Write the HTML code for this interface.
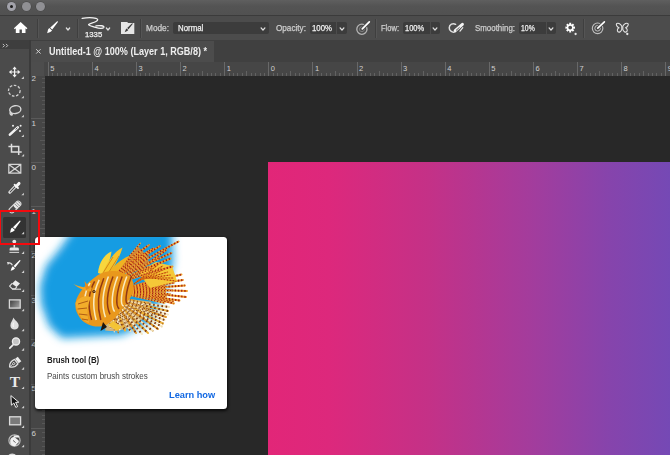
<!DOCTYPE html>
<html>
<head>
<meta charset="utf-8">
<title>Photoshop Brush Tool</title>
<style>
html,body{margin:0;padding:0;}
body{width:670px;height:455px;overflow:hidden;position:relative;background:#282828;font-family:"Liberation Sans",sans-serif;color:#dcdcdc;}
.abs{position:absolute;}
#titlebar{left:0;top:0;width:670px;height:15px;background:linear-gradient(#5f5f5f,#545454 40%,#515151);}
#titleline{left:0;top:15px;width:670px;height:1px;background:#3b3b3b;}
.dot{position:absolute;top:1.8px;width:9.4px;height:9.4px;border-radius:50%;background:#909094;box-shadow:0 0 0 0.5px #474747;}
.dot i{position:absolute;left:3px;top:3px;width:3.4px;height:3.4px;border-radius:50%;background:#1a1a1a;}
#optbar{left:0;top:16px;width:670px;height:24px;background:#4c4c4c;}
#tabbar{left:0;top:40px;width:670px;height:22px;background:#404040;}
#tab{left:31px;top:41px;width:183px;height:21px;background:#4c4c4c;}
#tabtxt{left:48.5px;top:46px;font-size:9.6px;font-weight:bold;color:#e8e8e8;white-space:nowrap;line-height:12px;letter-spacing:0px;}
#tabx{left:35.5px;top:45px;font-size:10px;color:#cfcfcf;line-height:12px;}
#toolhead{left:0;top:40px;width:30px;height:9px;background:#3e3e3e;}
#toolbar{left:0;top:49px;width:30px;height:406px;background:#4b4b4b;}
#tooledge{left:29px;top:40px;width:2px;height:415px;background:#3b3b3b;}
#hruler{left:31px;top:62px;width:639px;height:14px;background:#464646;}
#vruler{left:31px;top:76px;width:13.5px;height:379px;background:#464646;}
#rcorner{left:31px;top:62px;width:13px;height:14px;background:#4d4d4d;}
.tk{position:absolute;width:1px;background:#686868;}
.tk.h{height:1px;}
.tk.m{background:#626262;}
.rn{position:absolute;font-size:7.5px;line-height:8px;color:#d0d0d0;}
.opt{position:absolute;font-size:9px;line-height:12px;top:22px;color:#dddddd;white-space:nowrap;}
.box{position:absolute;top:22px;height:12px;background:#3c3c3c;border-radius:2px;}
.box b{position:absolute;top:0;width:1px;height:12px;background:#4c4c4c;}
.vsep{position:absolute;top:19px;width:1px;height:19px;background:#3f3f3f;border-right:1px solid #555;}
#canvas{left:268px;top:162px;width:402px;height:293px;background:linear-gradient(90deg,#e22678 0%,#dd287c 15%,#c43187 40%,#a43c9c 65%,#8644ac 85%,#7549b5 100%);}
#tip{left:34.8px;top:237.2px;width:192px;height:172.3px;background:#ffffff;border-radius:3.5px;overflow:hidden;box-shadow:0.5px 1.5px 3px 0.5px rgba(0,0,0,0.75);}
#redbox{left:-1px;top:209.5px;width:37px;height:31px;border:2px solid #f40a0e;}
#sel{left:3px;top:217px;width:22.5px;height:20.5px;background:#333333;border-radius:1.5px;}
.tt{position:absolute;white-space:nowrap;}
svg{position:absolute;overflow:visible;}
.tx{position:absolute;white-space:nowrap;line-height:12px;transform-origin:0 50%;}
.rn.v{font-size:8px;}
.tk.h.M{background:#5a5a5a;}
.tk.h.m{background:#585858;}

</style>
</head>
<body>
<div id="titlebar" class="abs">
  <div class="dot" style="left:6.6px;background:#a2a2aa;"><i></i></div>
  <div class="dot" style="left:21.5px;"></div>
  <div class="dot" style="left:36px;"></div>
</div>
<div id="titleline" class="abs"></div>
<div id="optbar" class="abs"></div>
<div id="opts">
  <div class="vsep" style="left:37px;"></div>
  <div class="vsep" style="left:77px;"></div>
  <div class="vsep" style="left:140px;"></div>
  <div class="vsep" style="left:375px;"></div>
  <div class="vsep" style="left:583px;"></div>
  <div class="box" style="left:173px;width:96px;"></div>
  <div class="box" style="left:309.5px;width:37px;"><b style="left:26.5px"></b></div>
  <div class="box" style="left:403px;width:37px;"><b style="left:27px"></b></div>
  <div class="box" style="left:519px;width:37px;"><b style="left:26.5px"></b></div>
</div>
<div id="tabbar" class="abs"></div>
<div id="tab" class="abs"></div>
<div id="toolhead" class="abs"></div>
<div id="toolbar" class="abs"></div>
<div id="tooledge" class="abs"></div>
<div id="hruler" class="abs"></div>
<div id="vruler" class="abs"></div>
<div id="rcorner" class="abs"></div>
<div class="tk" style="left:47.8px;top:62px;height:14px;"></div>
<div class="tk m" style="left:52.2px;top:73px;height:3px;"></div>
<div class="tk m" style="left:56.6px;top:73px;height:3px;"></div>
<div class="tk m" style="left:61.0px;top:73px;height:3px;"></div>
<div class="tk m" style="left:65.4px;top:73px;height:3px;"></div>
<div class="tk m" style="left:69.9px;top:71px;height:5px;"></div>
<div class="tk m" style="left:74.3px;top:73px;height:3px;"></div>
<div class="tk m" style="left:78.7px;top:73px;height:3px;"></div>
<div class="tk m" style="left:83.1px;top:73px;height:3px;"></div>
<div class="tk m" style="left:87.5px;top:73px;height:3px;"></div>
<div class="tk" style="left:91.9px;top:62px;height:14px;"></div>
<div class="tk m" style="left:96.3px;top:73px;height:3px;"></div>
<div class="tk m" style="left:100.7px;top:73px;height:3px;"></div>
<div class="tk m" style="left:105.1px;top:73px;height:3px;"></div>
<div class="tk m" style="left:109.5px;top:73px;height:3px;"></div>
<div class="tk m" style="left:114.0px;top:71px;height:5px;"></div>
<div class="tk m" style="left:118.4px;top:73px;height:3px;"></div>
<div class="tk m" style="left:122.8px;top:73px;height:3px;"></div>
<div class="tk m" style="left:127.2px;top:73px;height:3px;"></div>
<div class="tk m" style="left:131.6px;top:73px;height:3px;"></div>
<div class="tk" style="left:136.0px;top:62px;height:14px;"></div>
<div class="tk m" style="left:140.4px;top:73px;height:3px;"></div>
<div class="tk m" style="left:144.8px;top:73px;height:3px;"></div>
<div class="tk m" style="left:149.2px;top:73px;height:3px;"></div>
<div class="tk m" style="left:153.6px;top:73px;height:3px;"></div>
<div class="tk m" style="left:158.1px;top:71px;height:5px;"></div>
<div class="tk m" style="left:162.5px;top:73px;height:3px;"></div>
<div class="tk m" style="left:166.9px;top:73px;height:3px;"></div>
<div class="tk m" style="left:171.3px;top:73px;height:3px;"></div>
<div class="tk m" style="left:175.7px;top:73px;height:3px;"></div>
<div class="tk" style="left:180.1px;top:62px;height:14px;"></div>
<div class="tk m" style="left:184.5px;top:73px;height:3px;"></div>
<div class="tk m" style="left:188.9px;top:73px;height:3px;"></div>
<div class="tk m" style="left:193.3px;top:73px;height:3px;"></div>
<div class="tk m" style="left:197.7px;top:73px;height:3px;"></div>
<div class="tk m" style="left:202.2px;top:71px;height:5px;"></div>
<div class="tk m" style="left:206.6px;top:73px;height:3px;"></div>
<div class="tk m" style="left:211.0px;top:73px;height:3px;"></div>
<div class="tk m" style="left:215.4px;top:73px;height:3px;"></div>
<div class="tk m" style="left:219.8px;top:73px;height:3px;"></div>
<div class="tk" style="left:224.2px;top:62px;height:14px;"></div>
<div class="tk m" style="left:228.6px;top:73px;height:3px;"></div>
<div class="tk m" style="left:233.0px;top:73px;height:3px;"></div>
<div class="tk m" style="left:237.4px;top:73px;height:3px;"></div>
<div class="tk m" style="left:241.8px;top:73px;height:3px;"></div>
<div class="tk m" style="left:246.2px;top:71px;height:5px;"></div>
<div class="tk m" style="left:250.7px;top:73px;height:3px;"></div>
<div class="tk m" style="left:255.1px;top:73px;height:3px;"></div>
<div class="tk m" style="left:259.5px;top:73px;height:3px;"></div>
<div class="tk m" style="left:263.9px;top:73px;height:3px;"></div>
<div class="tk" style="left:268.3px;top:62px;height:14px;"></div>
<div class="tk m" style="left:272.7px;top:73px;height:3px;"></div>
<div class="tk m" style="left:277.1px;top:73px;height:3px;"></div>
<div class="tk m" style="left:281.5px;top:73px;height:3px;"></div>
<div class="tk m" style="left:285.9px;top:73px;height:3px;"></div>
<div class="tk m" style="left:290.4px;top:71px;height:5px;"></div>
<div class="tk m" style="left:294.8px;top:73px;height:3px;"></div>
<div class="tk m" style="left:299.2px;top:73px;height:3px;"></div>
<div class="tk m" style="left:303.6px;top:73px;height:3px;"></div>
<div class="tk m" style="left:308.0px;top:73px;height:3px;"></div>
<div class="tk" style="left:312.4px;top:62px;height:14px;"></div>
<div class="tk m" style="left:316.8px;top:73px;height:3px;"></div>
<div class="tk m" style="left:321.2px;top:73px;height:3px;"></div>
<div class="tk m" style="left:325.6px;top:73px;height:3px;"></div>
<div class="tk m" style="left:330.0px;top:73px;height:3px;"></div>
<div class="tk m" style="left:334.5px;top:71px;height:5px;"></div>
<div class="tk m" style="left:338.9px;top:73px;height:3px;"></div>
<div class="tk m" style="left:343.3px;top:73px;height:3px;"></div>
<div class="tk m" style="left:347.7px;top:73px;height:3px;"></div>
<div class="tk m" style="left:352.1px;top:73px;height:3px;"></div>
<div class="tk" style="left:356.5px;top:62px;height:14px;"></div>
<div class="tk m" style="left:360.9px;top:73px;height:3px;"></div>
<div class="tk m" style="left:365.3px;top:73px;height:3px;"></div>
<div class="tk m" style="left:369.7px;top:73px;height:3px;"></div>
<div class="tk m" style="left:374.1px;top:73px;height:3px;"></div>
<div class="tk m" style="left:378.6px;top:71px;height:5px;"></div>
<div class="tk m" style="left:383.0px;top:73px;height:3px;"></div>
<div class="tk m" style="left:387.4px;top:73px;height:3px;"></div>
<div class="tk m" style="left:391.8px;top:73px;height:3px;"></div>
<div class="tk m" style="left:396.2px;top:73px;height:3px;"></div>
<div class="tk" style="left:400.6px;top:62px;height:14px;"></div>
<div class="tk m" style="left:405.0px;top:73px;height:3px;"></div>
<div class="tk m" style="left:409.4px;top:73px;height:3px;"></div>
<div class="tk m" style="left:413.8px;top:73px;height:3px;"></div>
<div class="tk m" style="left:418.2px;top:73px;height:3px;"></div>
<div class="tk m" style="left:422.6px;top:71px;height:5px;"></div>
<div class="tk m" style="left:427.1px;top:73px;height:3px;"></div>
<div class="tk m" style="left:431.5px;top:73px;height:3px;"></div>
<div class="tk m" style="left:435.9px;top:73px;height:3px;"></div>
<div class="tk m" style="left:440.3px;top:73px;height:3px;"></div>
<div class="tk" style="left:444.7px;top:62px;height:14px;"></div>
<div class="tk m" style="left:449.1px;top:73px;height:3px;"></div>
<div class="tk m" style="left:453.5px;top:73px;height:3px;"></div>
<div class="tk m" style="left:457.9px;top:73px;height:3px;"></div>
<div class="tk m" style="left:462.3px;top:73px;height:3px;"></div>
<div class="tk m" style="left:466.8px;top:71px;height:5px;"></div>
<div class="tk m" style="left:471.2px;top:73px;height:3px;"></div>
<div class="tk m" style="left:475.6px;top:73px;height:3px;"></div>
<div class="tk m" style="left:480.0px;top:73px;height:3px;"></div>
<div class="tk m" style="left:484.4px;top:73px;height:3px;"></div>
<div class="tk" style="left:488.8px;top:62px;height:14px;"></div>
<div class="tk m" style="left:493.2px;top:73px;height:3px;"></div>
<div class="tk m" style="left:497.6px;top:73px;height:3px;"></div>
<div class="tk m" style="left:502.0px;top:73px;height:3px;"></div>
<div class="tk m" style="left:506.4px;top:73px;height:3px;"></div>
<div class="tk m" style="left:510.9px;top:71px;height:5px;"></div>
<div class="tk m" style="left:515.3px;top:73px;height:3px;"></div>
<div class="tk m" style="left:519.7px;top:73px;height:3px;"></div>
<div class="tk m" style="left:524.1px;top:73px;height:3px;"></div>
<div class="tk m" style="left:528.5px;top:73px;height:3px;"></div>
<div class="tk" style="left:532.9px;top:62px;height:14px;"></div>
<div class="tk m" style="left:537.3px;top:73px;height:3px;"></div>
<div class="tk m" style="left:541.7px;top:73px;height:3px;"></div>
<div class="tk m" style="left:546.1px;top:73px;height:3px;"></div>
<div class="tk m" style="left:550.5px;top:73px;height:3px;"></div>
<div class="tk m" style="left:555.0px;top:71px;height:5px;"></div>
<div class="tk m" style="left:559.4px;top:73px;height:3px;"></div>
<div class="tk m" style="left:563.8px;top:73px;height:3px;"></div>
<div class="tk m" style="left:568.2px;top:73px;height:3px;"></div>
<div class="tk m" style="left:572.6px;top:73px;height:3px;"></div>
<div class="tk" style="left:577.0px;top:62px;height:14px;"></div>
<div class="tk m" style="left:581.4px;top:73px;height:3px;"></div>
<div class="tk m" style="left:585.8px;top:73px;height:3px;"></div>
<div class="tk m" style="left:590.2px;top:73px;height:3px;"></div>
<div class="tk m" style="left:594.6px;top:73px;height:3px;"></div>
<div class="tk m" style="left:599.0px;top:71px;height:5px;"></div>
<div class="tk m" style="left:603.5px;top:73px;height:3px;"></div>
<div class="tk m" style="left:607.9px;top:73px;height:3px;"></div>
<div class="tk m" style="left:612.3px;top:73px;height:3px;"></div>
<div class="tk m" style="left:616.7px;top:73px;height:3px;"></div>
<div class="tk" style="left:621.1px;top:62px;height:14px;"></div>
<div class="tk m" style="left:625.5px;top:73px;height:3px;"></div>
<div class="tk m" style="left:629.9px;top:73px;height:3px;"></div>
<div class="tk m" style="left:634.3px;top:73px;height:3px;"></div>
<div class="tk m" style="left:638.7px;top:73px;height:3px;"></div>
<div class="tk m" style="left:643.2px;top:71px;height:5px;"></div>
<div class="tk m" style="left:647.6px;top:73px;height:3px;"></div>
<div class="tk m" style="left:652.0px;top:73px;height:3px;"></div>
<div class="tk m" style="left:656.4px;top:73px;height:3px;"></div>
<div class="tk m" style="left:660.8px;top:73px;height:3px;"></div>
<div class="tk" style="left:665.2px;top:62px;height:14px;"></div>
<div class="tk m" style="left:669.6px;top:73px;height:3px;"></div>
<div class="rn" style="left:50.3px;top:65px;">5</div>
<div class="rn" style="left:94.4px;top:65px;">4</div>
<div class="rn" style="left:138.5px;top:65px;">3</div>
<div class="rn" style="left:182.6px;top:65px;">2</div>
<div class="rn" style="left:226.7px;top:65px;">1</div>
<div class="rn" style="left:270.8px;top:65px;">0</div>
<div class="rn" style="left:314.9px;top:65px;">1</div>
<div class="rn" style="left:359.0px;top:65px;">2</div>
<div class="rn" style="left:403.1px;top:65px;">3</div>
<div class="rn" style="left:447.2px;top:65px;">4</div>
<div class="rn" style="left:491.3px;top:65px;">5</div>
<div class="rn" style="left:535.4px;top:65px;">6</div>
<div class="rn" style="left:579.5px;top:65px;">7</div>
<div class="rn" style="left:623.6px;top:65px;">8</div>
<div class="rn" style="left:667.7px;top:65px;">9</div>
<div class="tk h m" style="top:77.8px;left:41.5px;width:3px;"></div>
<div class="tk h m" style="top:82.3px;left:41.5px;width:3px;"></div>
<div class="tk h m" style="top:86.7px;left:41.5px;width:3px;"></div>
<div class="tk h m" style="top:91.1px;left:41.5px;width:3px;"></div>
<div class="tk h m" style="top:95.5px;left:39.5px;width:5px;"></div>
<div class="tk h m" style="top:100.0px;left:41.5px;width:3px;"></div>
<div class="tk h m" style="top:104.4px;left:41.5px;width:3px;"></div>
<div class="tk h m" style="top:108.8px;left:41.5px;width:3px;"></div>
<div class="tk h m" style="top:113.3px;left:41.5px;width:3px;"></div>
<div class="tk h M" style="top:117.7px;left:31px;width:13.5px;"></div>
<div class="tk h m" style="top:122.1px;left:41.5px;width:3px;"></div>
<div class="tk h m" style="top:126.6px;left:41.5px;width:3px;"></div>
<div class="tk h m" style="top:131.0px;left:41.5px;width:3px;"></div>
<div class="tk h m" style="top:135.4px;left:41.5px;width:3px;"></div>
<div class="tk h m" style="top:139.8px;left:39.5px;width:5px;"></div>
<div class="tk h m" style="top:144.3px;left:41.5px;width:3px;"></div>
<div class="tk h m" style="top:148.7px;left:41.5px;width:3px;"></div>
<div class="tk h m" style="top:153.1px;left:41.5px;width:3px;"></div>
<div class="tk h m" style="top:157.6px;left:41.5px;width:3px;"></div>
<div class="tk h M" style="top:162.0px;left:31px;width:13.5px;"></div>
<div class="tk h m" style="top:166.4px;left:41.5px;width:3px;"></div>
<div class="tk h m" style="top:170.9px;left:41.5px;width:3px;"></div>
<div class="tk h m" style="top:175.3px;left:41.5px;width:3px;"></div>
<div class="tk h m" style="top:179.7px;left:41.5px;width:3px;"></div>
<div class="tk h m" style="top:184.2px;left:39.5px;width:5px;"></div>
<div class="tk h m" style="top:188.6px;left:41.5px;width:3px;"></div>
<div class="tk h m" style="top:193.0px;left:41.5px;width:3px;"></div>
<div class="tk h m" style="top:197.4px;left:41.5px;width:3px;"></div>
<div class="tk h m" style="top:201.9px;left:41.5px;width:3px;"></div>
<div class="tk h M" style="top:206.3px;left:31px;width:13.5px;"></div>
<div class="tk h m" style="top:210.7px;left:41.5px;width:3px;"></div>
<div class="tk h m" style="top:215.2px;left:41.5px;width:3px;"></div>
<div class="tk h m" style="top:219.6px;left:41.5px;width:3px;"></div>
<div class="tk h m" style="top:224.0px;left:41.5px;width:3px;"></div>
<div class="tk h m" style="top:228.4px;left:39.5px;width:5px;"></div>
<div class="tk h m" style="top:232.9px;left:41.5px;width:3px;"></div>
<div class="tk h m" style="top:237.3px;left:41.5px;width:3px;"></div>
<div class="tk h m" style="top:241.7px;left:41.5px;width:3px;"></div>
<div class="tk h m" style="top:246.2px;left:41.5px;width:3px;"></div>
<div class="tk h M" style="top:250.6px;left:31px;width:13.5px;"></div>
<div class="tk h m" style="top:255.0px;left:41.5px;width:3px;"></div>
<div class="tk h m" style="top:259.5px;left:41.5px;width:3px;"></div>
<div class="tk h m" style="top:263.9px;left:41.5px;width:3px;"></div>
<div class="tk h m" style="top:268.3px;left:41.5px;width:3px;"></div>
<div class="tk h m" style="top:272.8px;left:39.5px;width:5px;"></div>
<div class="tk h m" style="top:277.2px;left:41.5px;width:3px;"></div>
<div class="tk h m" style="top:281.6px;left:41.5px;width:3px;"></div>
<div class="tk h m" style="top:286.0px;left:41.5px;width:3px;"></div>
<div class="tk h m" style="top:290.5px;left:41.5px;width:3px;"></div>
<div class="tk h M" style="top:294.9px;left:31px;width:13.5px;"></div>
<div class="tk h m" style="top:299.3px;left:41.5px;width:3px;"></div>
<div class="tk h m" style="top:303.8px;left:41.5px;width:3px;"></div>
<div class="tk h m" style="top:308.2px;left:41.5px;width:3px;"></div>
<div class="tk h m" style="top:312.6px;left:41.5px;width:3px;"></div>
<div class="tk h m" style="top:317.1px;left:39.5px;width:5px;"></div>
<div class="tk h m" style="top:321.5px;left:41.5px;width:3px;"></div>
<div class="tk h m" style="top:325.9px;left:41.5px;width:3px;"></div>
<div class="tk h m" style="top:330.3px;left:41.5px;width:3px;"></div>
<div class="tk h m" style="top:334.8px;left:41.5px;width:3px;"></div>
<div class="tk h M" style="top:339.2px;left:31px;width:13.5px;"></div>
<div class="tk h m" style="top:343.6px;left:41.5px;width:3px;"></div>
<div class="tk h m" style="top:348.1px;left:41.5px;width:3px;"></div>
<div class="tk h m" style="top:352.5px;left:41.5px;width:3px;"></div>
<div class="tk h m" style="top:356.9px;left:41.5px;width:3px;"></div>
<div class="tk h m" style="top:361.3px;left:39.5px;width:5px;"></div>
<div class="tk h m" style="top:365.8px;left:41.5px;width:3px;"></div>
<div class="tk h m" style="top:370.2px;left:41.5px;width:3px;"></div>
<div class="tk h m" style="top:374.6px;left:41.5px;width:3px;"></div>
<div class="tk h m" style="top:379.1px;left:41.5px;width:3px;"></div>
<div class="tk h M" style="top:383.5px;left:31px;width:13.5px;"></div>
<div class="tk h m" style="top:387.9px;left:41.5px;width:3px;"></div>
<div class="tk h m" style="top:392.4px;left:41.5px;width:3px;"></div>
<div class="tk h m" style="top:396.8px;left:41.5px;width:3px;"></div>
<div class="tk h m" style="top:401.2px;left:41.5px;width:3px;"></div>
<div class="tk h m" style="top:405.6px;left:39.5px;width:5px;"></div>
<div class="tk h m" style="top:410.1px;left:41.5px;width:3px;"></div>
<div class="tk h m" style="top:414.5px;left:41.5px;width:3px;"></div>
<div class="tk h m" style="top:418.9px;left:41.5px;width:3px;"></div>
<div class="tk h m" style="top:423.4px;left:41.5px;width:3px;"></div>
<div class="tk h M" style="top:427.8px;left:31px;width:13.5px;"></div>
<div class="tk h m" style="top:432.2px;left:41.5px;width:3px;"></div>
<div class="tk h m" style="top:436.7px;left:41.5px;width:3px;"></div>
<div class="tk h m" style="top:441.1px;left:41.5px;width:3px;"></div>
<div class="tk h m" style="top:445.5px;left:41.5px;width:3px;"></div>
<div class="tk h m" style="top:449.9px;left:39.5px;width:5px;"></div>
<div class="tk h m" style="top:454.4px;left:41.5px;width:3px;"></div>
<div class="rn v" style="left:31.6px;top:75.2px;">2</div>
<div class="rn v" style="left:31.6px;top:119.5px;">1</div>
<div class="rn v" style="left:31.6px;top:163.8px;">0</div>
<div class="rn v" style="left:31.6px;top:208.1px;">1</div>
<div class="rn v" style="left:31.6px;top:252.4px;">2</div>
<div class="rn v" style="left:31.6px;top:296.7px;">3</div>
<div class="rn v" style="left:31.6px;top:341.0px;">4</div>
<div class="rn v" style="left:31.6px;top:385.3px;">5</div>
<div class="rn v" style="left:31.6px;top:429.6px;">6</div>
<div id="canvas" class="abs"></div>
<div id="sel" class="abs"></div>
<svg style="left:62.8px;top:23.6px" width="10" height="10" viewBox="-5 -5 10 10"><path d="M-1.65 -1.0 L0 1.0 L1.65 -1.0" fill="none" stroke="#e0e0e0" stroke-width="1.25" stroke-linecap="round" stroke-linejoin="round"/></svg><svg style="left:103.3px;top:23.5px" width="10" height="10" viewBox="-5 -5 10 10"><path d="M-1.65 -1.0 L0 1.0 L1.65 -1.0" fill="none" stroke="#e0e0e0" stroke-width="1.25" stroke-linecap="round" stroke-linejoin="round"/></svg><svg style="left:258.2px;top:23.6px" width="10" height="10" viewBox="-5 -5 10 10"><path d="M-1.9 -1.1 L0 1.1 L1.9 -1.1" fill="none" stroke="#e0e0e0" stroke-width="1.3" stroke-linecap="round" stroke-linejoin="round"/></svg><svg style="left:336.6px;top:23.6px" width="10" height="10" viewBox="-5 -5 10 10"><path d="M-1.9 -1.1 L0 1.1 L1.9 -1.1" fill="none" stroke="#e0e0e0" stroke-width="1.3" stroke-linecap="round" stroke-linejoin="round"/></svg><svg style="left:430.3px;top:23.6px" width="10" height="10" viewBox="-5 -5 10 10"><path d="M-1.9 -1.1 L0 1.1 L1.9 -1.1" fill="none" stroke="#e0e0e0" stroke-width="1.3" stroke-linecap="round" stroke-linejoin="round"/></svg><svg style="left:546px;top:23.6px" width="10" height="10" viewBox="-5 -5 10 10"><path d="M-1.9 -1.1 L0 1.1 L1.9 -1.1" fill="none" stroke="#e0e0e0" stroke-width="1.3" stroke-linecap="round" stroke-linejoin="round"/></svg>
<svg id="ico" style="left:0;top:0" width="670" height="455" viewBox="0 0 670 455">
<path d="M20.65 21.9 L27.4 28.3 L26.5 29.2 L25.5 28.3 L25.5 33.1 L21.9 33.1 L21.9 29.4 L19.5 29.4 L19.5 33.1 L15.8 33.1 L15.8 28.3 L14.8 29.2 L13.9 28.3Z" fill="#fff"/>
<g transform="translate(47,33.3) rotate(-48.2)" fill="#fff"><path d="M0 0 C1.63 -0.3 3.05 -2.20 5.48 -1.90 L5.48 1.90 C3.45 2.20 1.63 0.7 0 0Z"/><path d="M6.30 -1.45 L15.44 -0.6 A0.6 0.6 0 0 1 15.44 0.6 L6.30 1.45Z"/></g>
<path d="M82.2 18.3 C87 17.5 93 17.6 96 18.3 C98.5 19 98 20.5 96 21.5 C93 23 89 23.5 88.6 24.5 C88.3 25.4 92 26.2 95.6 27.4 C99 28.6 103.2 28.8 103.9 27.2 C104.4 25.8 100 25.2 96 25.8" fill="none" stroke="#f4f4f4" stroke-width="1.35" stroke-linecap="round"/>
<path d="M121 22 L127.3 22 L128 22.9 L134.3 22.9 L134.3 33.9 L121 33.9Z" fill="#e6e6e6"/>
<g transform="translate(124.6,32.3) rotate(-48)" fill="#3a3a3a"><path d="M0 0 C1.5 -0.3 2.5 -1.4 4.2 -1.2 L4.2 1.2 C2.8 1.4 1.4 0.6 0 0Z"/><path d="M4.9 -0.9 L11.8 -0.5 L11.8 0.5 L4.9 0.9Z"/></g>
<circle cx="361.9" cy="29.2" r="5.1" fill="none" stroke="#b4b4b4" stroke-width="1.3"/>
<circle cx="361.9" cy="29.2" r="2.4" fill="none" stroke="#888" stroke-width="0.9"/>
<path d="M361.9 29.2 L369.3 21.9" stroke="#4c4c4c" stroke-width="3.6" stroke-linecap="round"/>
<path d="M362.3 28.9 L369.3 21.9" stroke="#fff" stroke-width="1.7" stroke-linecap="round"/>
<path d="M455.6 24.3 A4.2 4.2 0 1 0 455.4 31.6" fill="none" stroke="#e0e0e0" stroke-width="1.5" stroke-linecap="round"/>
<path d="M455.2 30.6 L462.4 24.3" stroke="#f4f4f4" stroke-width="3" stroke-linecap="round"/>
<path d="M456.3 30.2 L459.3 27.5" stroke="#444" stroke-width="0.9" stroke-linecap="round"/>
<path d="M460 31.2 L462.8 27.6" stroke="#e8e8e8" stroke-width="1.2" stroke-linecap="round"/>
<path d="M574.99 26.57 L574.99 28.63 L573.58 28.50 L573.23 29.36 L574.32 30.26 L572.86 31.72 L571.96 30.63 L571.10 30.98 L571.23 32.39 L569.17 32.39 L569.30 30.98 L568.44 30.63 L567.54 31.72 L566.08 30.26 L567.17 29.36 L566.82 28.50 L565.41 28.63 L565.41 26.57 L566.82 26.70 L567.17 25.84 L566.08 24.94 L567.54 23.48 L568.44 24.57 L569.30 24.22 L569.17 22.81 L571.23 22.81 L571.10 24.22 L571.96 24.57 L572.86 23.48 L574.32 24.94 L573.23 25.84 L573.58 26.70Z M572.1 27.6 A1.9 1.9 0 1 0 568.3000000000001 27.6 A1.9 1.9 0 1 0 572.1 27.6Z" fill="#fff" fill-rule="evenodd"/>
<circle cx="575.6" cy="34" r="1.15" fill="#e8e8e8"/>
<circle cx="597.6" cy="28.3" r="5.3" fill="none" stroke="#c0c0c0" stroke-width="1.1"/>
<circle cx="597.6" cy="28.3" r="2.8" fill="none" stroke="#c0c0c0" stroke-width="1"/>
<path d="M597.8 28.1 L604.4 21.9" stroke="#4c4c4c" stroke-width="3.4" stroke-linecap="round"/>
<path d="M597.8 28.1 L604.4 21.9" stroke="#fff" stroke-width="1.6" stroke-linecap="round"/>
<g fill="none" stroke="#e4e4e4" stroke-width="1.1" stroke-linejoin="round"><path d="M621.8 26.2 C620.5 23.6 617.6 22.6 616.6 23.6 C615.8 24.6 617 27 619 27.8 C617.4 28.4 616.8 30.6 618 31.8 C619.3 32.8 621.2 31.4 621.8 29.4Z"/><path d="M622.8 26.2 C624.1 23.6 627 22.6 628 23.6 C628.8 24.6 627.6 27 625.6 27.8 C627.2 28.4 627.8 30.6 626.6 31.8 C625.3 32.8 623.4 31.4 622.8 29.4Z"/></g>
<circle cx="627.3" cy="34" r="1.15" fill="#e8e8e8"/>
<path d="M36.2 49.2 L40.6 53.6 M40.6 49.2 L36.2 53.6" stroke="#d0d0d0" stroke-width="1" fill="none"/>
<path d="M2.8 43.9 L4.5 45.6 L2.8 47.3 M6 43.9 L7.7 45.6 L6 47.3" stroke="#c8c8c8" stroke-width="1" fill="none"/>
<g fill="#f2f2f2"><path d="M14.6 66.6 L16.8 69.2 L12.399999999999999 69.2Z"/><path d="M14.6 77.4 L16.8 74.8 L12.399999999999999 74.8Z"/><path d="M8.899999999999999 72 L11.6 69.8 L11.6 74.2Z"/><path d="M20.3 72 L17.6 69.8 L17.6 74.2Z"/><path d="M14.0 68.8 h1.2 v2.6 h2.6 v1.2 h-2.6 v2.6 h-1.2 v-2.6 h-2.6 v-1.2 h2.6Z"/></g>
<path d="M23.900000000000002 76.3 L23.900000000000002 78.89999999999999 L21.3 78.89999999999999Z" fill="#cfcfcf"/>
<ellipse cx="14.3" cy="90.7" rx="5.8" ry="5.4" fill="none" stroke="#cfcfcf" stroke-width="1.3" stroke-dasharray="2.6 1.6"/>
<path d="M23.900000000000002 95.7 L23.900000000000002 98.3 L21.3 98.3Z" fill="#cfcfcf"/>
<g fill="none" stroke="#d8d8d8" stroke-width="1.4" stroke-linecap="round"><ellipse cx="15.3" cy="109.6" rx="5.6" ry="3.9" transform="rotate(-8 15.3 109.6)"/><path d="M10.6 111.8 C9.6 113 10 114.6 11.4 115 C12.4 115.3 12.6 114 11.6 113.4"/></g>
<path d="M23.900000000000002 114.7 L23.900000000000002 117.3 L21.3 117.3Z" fill="#cfcfcf"/>
<path d="M9.9 134.6 L17.8 127.4" stroke="#f2f2f2" stroke-width="2.6" stroke-linecap="round"/>
<path d="M15.6 129.4 L17.4 127.8" stroke="#555" stroke-width="1" />
<circle cx="13" cy="125.7" r="1" fill="#eee"/><circle cx="20.6" cy="125.7" r="1" fill="#eee"/><circle cx="20" cy="131" r="1" fill="#eee"/>
<path d="M23.900000000000002 134.5 L23.900000000000002 137.10000000000002 L21.3 137.10000000000002Z" fill="#cfcfcf"/>
<path d="M8.4 146.5 H18.7 V155 M11.5 143.8 V152.1 H21.7" fill="none" stroke="#dedede" stroke-width="1.5"/>
<path d="M24.1 153.89999999999998 L24.1 156.5 L21.5 156.5Z" fill="#cfcfcf"/>
<path d="M8.8 164.4 H20.8 V173.2 H8.8Z M8.8 164.4 L20.8 173.2 M20.8 164.4 L8.8 173.2" fill="none" stroke="#d6d6d6" stroke-width="1.2"/>
<path d="M9.8 192.2 L15.4 186.4" stroke="#e8e8e8" stroke-width="3" stroke-linecap="round"/>
<path d="M10.2 191.8 L15 186.8" stroke="#4b4b4b" stroke-width="1.1" stroke-linecap="round"/>
<path d="M14.6 184.6 L18 188" stroke="#f4f4f4" stroke-width="1.8" stroke-linecap="round"/>
<path d="M16.4 186.2 L19 183.4" stroke="#f4f4f4" stroke-width="3" stroke-linecap="round"/>
<path d="M23.900000000000002 192.7 L23.900000000000002 195.3 L21.3 195.3Z" fill="#cfcfcf"/>
<g transform="translate(15 207) rotate(-45)"><rect x="-7" y="-2.6" width="14" height="5.2" rx="2" fill="none" stroke="#d8d8d8" stroke-width="1.2"/><rect x="-0.5" y="-2.6" width="6.5" height="5.2" rx="1.5" fill="#e8e8e8"/><path d="M2 -2.6 V2.6 M4 -2.6 V2.6" stroke="#666" stroke-width="0.7"/></g>
<g transform="translate(9.9,232.8) rotate(-49.0)" fill="#fff"><path d="M0 0 C1.62 -0.3 3.04 -2.20 5.46 -1.90 L5.46 1.90 C3.44 2.20 1.62 0.7 0 0Z"/><path d="M6.27 -1.4 L15.38 -0.6 A0.6 0.6 0 0 1 15.38 0.6 L6.27 1.4Z"/></g>
<path d="M24.1 231.7 L24.1 234.3 L21.5 234.3Z" fill="#cfcfcf"/>
<circle cx="14.3" cy="241.6" r="1.9" fill="#e6e6e6"/><path d="M13.5 242 H15.1 V247.8 H13.5Z" fill="#e6e6e6"/>
<path d="M9.6 250.6 V249 Q9.6 247.6 11.4 247.6 H17.2 Q18.9 247.6 18.9 249 V250.6Z" fill="#e6e6e6"/><path d="M9.4 252.4 H19.1" stroke="#d0d0d0" stroke-width="1.1"/>
<path d="M24.1 251.29999999999998 L24.1 253.9 L21.5 253.9Z" fill="#cfcfcf"/>
<g transform="translate(10.6,270.8) rotate(-47.6)" fill="#fff"><path d="M0 0 C1.45 -0.3 2.72 -1.80 4.90 -1.50 L4.90 1.50 C3.09 1.80 1.45 0.7 0 0Z"/><path d="M5.63 -1.1 L13.80 -0.6 A0.6 0.6 0 0 1 13.80 0.6 L5.63 1.1Z"/></g>
<path d="M12.4 265.2 C11.2 263 9.4 262.4 8.2 263.6" fill="none" stroke="#dcdcdc" stroke-width="1.2"/><path d="M6.9 262 L9.9 262.2 L7.9 265Z" fill="#dcdcdc"/>
<path d="M24.1 270.3 L24.1 272.90000000000003 L21.5 272.90000000000003Z" fill="#cfcfcf"/>
<path d="M15.4 280.2 L20 283.4 L16.6 287 L12 283.8Z" fill="#ececec"/>
<path d="M12.4 283.2 L9.6 286.2 L12 288.6 L15.4 288.8 L16.8 286.6" fill="none" stroke="#dcdcdc" stroke-width="1.2" stroke-linejoin="round"/>
<path d="M12 289.2 H21" stroke="#dcdcdc" stroke-width="1.1"/>
<path d="M24.1 289.3 L24.1 291.90000000000003 L21.5 291.90000000000003Z" fill="#cfcfcf"/>
<defs><linearGradient id="gg" x1="0" y1="0" x2="1" y2="0.6"><stop offset="0" stop-color="#3a3a3a"/><stop offset="1" stop-color="#9a9a9a"/></linearGradient></defs>
<rect x="9.4" y="299.9" width="10.8" height="8.2" fill="url(#gg)" stroke="#d8d8d8" stroke-width="1.3"/>
<path d="M24.1 308.7 L24.1 311.3 L21.5 311.3Z" fill="#cfcfcf"/>
<path d="M13.4 317.6 C14.6 320.4 18.7 322.4 18.7 325.4 C18.7 327.8 16.9 329.4 14.6 329.4 C12.2 329.4 10.4 327.8 10.4 325.4 C10.4 322.6 12.8 320.4 13.4 317.6Z" fill="#dedede"/>
<path d="M13.8 322.6 C13 324 12.8 325.6 13.4 326.8" stroke="#fff" stroke-width="1" fill="none"/>
<path d="M24.1 328.7 L24.1 331.3 L21.5 331.3Z" fill="#cfcfcf"/>
<circle cx="16" cy="341.4" r="3.6" fill="#c4c4c4" stroke="#eeeeee" stroke-width="1.3"/>
<path d="M13 344.8 L9.8 348.2" stroke="#eeeeee" stroke-width="1.7" stroke-linecap="round"/>
<path d="M24.1 348.09999999999997 L24.1 350.7 L21.5 350.7Z" fill="#cfcfcf"/>
<g transform="translate(9.6 366.8) rotate(-38)"><path d="M0 0 C2 -2.8 5.4 -3.6 8.4 -2.8 L8.4 2.8 C5.4 3.6 2 2.8 0 0Z" fill="none" stroke="#e0e0e0" stroke-width="1.3" stroke-linejoin="round"/><path d="M9.3 -2.9 H12.6 V2.9 H9.3Z" fill="#ececec"/><circle cx="5.2" cy="0" r="1.1" fill="none" stroke="#e0e0e0" stroke-width="0.9"/><path d="M0 0 H4" stroke="#e0e0e0" stroke-width="0.8"/></g>
<path d="M24.1 367.09999999999997 L24.1 369.7 L21.5 369.7Z" fill="#cfcfcf"/>
<text x="14.9" y="387.3" text-anchor="middle" font-family="Liberation Serif, serif" font-size="15.5" font-weight="bold" fill="#eaeaea">T</text>
<path d="M24.1 386.5 L24.1 389.1 L21.5 389.1Z" fill="#cfcfcf"/>
<path d="M10.9 395.6 L11.4 405.2 L13.8 403 L15.8 407.4 L17.6 406.6 L15.6 402.4 L18.8 402.2Z" fill="#141414" stroke="#f0f0f0" stroke-width="1" stroke-linejoin="round"/>
<path d="M24.1 405.7 L24.1 408.3 L21.5 408.3Z" fill="#cfcfcf"/>
<rect x="9.6" y="416.8" width="11" height="8" fill="#7a7a7a" stroke="#dcdcdc" stroke-width="1.3"/>
<path d="M24.1 425.3 L24.1 427.90000000000003 L21.5 427.90000000000003Z" fill="#cfcfcf"/>
<circle cx="14.5" cy="440.5" r="5.6" fill="none" stroke="#bdbdbd" stroke-width="1.2"/>
<path d="M10.2 440 C11 437.4 13.4 436.4 15 437.4 L18.4 440.2 C19.4 441.4 18.6 443 17.2 443.4 L15.4 446 C13.4 446.6 10.6 445 10.2 443Z" fill="#f0f0f0"/>
<path d="M14.6 436.6 L18.4 436.4" stroke="#f0f0f0" stroke-width="2" stroke-linecap="round"/>
<path d="M13 440.4 L15.6 442.6" stroke="#555" stroke-width="0.9"/>
<path d="M24.1 444.7 L24.1 447.3 L21.5 447.3Z" fill="#cfcfcf"/>
<ellipse cx="12.2" cy="456" rx="3.8" ry="2.6" fill="#d8d8d8"/>
</svg>
<div id="tip" class="abs">
<svg style="left:-34.8px;top:-237.2px" width="670" height="455" viewBox="0 0 670 455">
<defs><filter id="bl" x="-20%" y="-20%" width="140%" height="140%"><feGaussianBlur stdDeviation="4.2"/></filter><filter id="b1" x="-20%" y="-20%" width="140%" height="140%"><feGaussianBlur stdDeviation="0.55"/></filter></defs>
<path d="M74 228 L172 228 L173 262 L168 284 L160 300 L150 322 L122 335 L62 338 L49 326 L41 304 L40 286 L46 266 L59 250Z" fill="#159ce2" filter="url(#bl)"/>
<g filter="url(#b1)">
<path d="M112.0 297.0 L151.6 301.7 L150.5 306.2 L148.7 310.5 L146.3 314.5 L143.2 318.2 L139.6 321.6 L135.5 324.5 L131.0 326.9 L126.1 328.8 L121.0 330.1 L115.7 330.9 L110.4 331.0 L105.1 330.5Z" fill="#e2b672" opacity="0.9"/>
<path d="M112.0 297.0 L135.8 299.8 L135.1 302.5 L134.0 305.1 L132.6 307.5 L130.7 309.7 L128.6 311.8 L126.1 313.5 L123.4 315.0 L120.5 316.1 L117.4 316.9 L114.2 317.3 L111.0 317.4 L107.8 317.1Z" fill="#c98a3c" opacity="0.9"/>
<path d="M116.0 291.0 L163.6 275.5 L164.2 277.6 L164.7 279.8 L165.2 281.9 L165.5 284.0 L165.8 286.2 L165.9 288.4 L166.0 290.6 L166.0 292.7 L165.8 294.9 L165.6 297.1 L165.3 299.3 L164.9 301.4Z" fill="#e0842a" opacity="0.9"/>
<path d="M112.0 277.0 L137.7 246.4 L139.1 247.6 L140.4 248.9 L141.7 250.2 L142.9 251.6 L144.1 253.1 L145.2 254.6 L146.2 256.2 L147.1 257.8 L148.0 259.5 L148.7 261.2 L149.4 262.9 L150.0 264.6Z" fill="#e0842a" opacity="0.9"/>
<path d="M111.8 297.2 Q140.2 303.5 169.0 307.0" fill="none" stroke="#f4dfae" stroke-width="2.0" stroke-linecap="round"/>
<path d="M111.8 297.2 Q140.2 303.5 169.0 307.0" fill="none" stroke="#7d3a14" stroke-width="2.0" stroke-dasharray="1.6 2.6"/>
<path d="M113.7 296.9 Q140.5 305.2 168.0 311.0" fill="none" stroke="#eeb23a" stroke-width="2.0" stroke-linecap="round"/>
<path d="M113.7 296.9 Q140.5 305.2 168.0 311.0" fill="none" stroke="#7d3a14" stroke-width="2.0" stroke-dasharray="1.6 2.6"/>
<path d="M112.0 297.3 Q139.6 307.3 168.0 314.5" fill="none" stroke="#f7e9c4" stroke-width="2.0" stroke-linecap="round"/>
<path d="M112.0 297.3 Q139.6 307.3 168.0 314.5" fill="none" stroke="#7d3a14" stroke-width="2.0" stroke-dasharray="1.6 2.6"/>
<path d="M110.7 297.0 Q137.9 308.4 166.0 317.0" fill="none" stroke="#e39a2a" stroke-width="2.0" stroke-linecap="round"/>
<path d="M110.7 297.0 Q137.9 308.4 166.0 317.0" fill="none" stroke="#7d3a14" stroke-width="2.0" stroke-dasharray="1.6 2.6"/>
<path d="M112.5 298.2 Q138.0 310.3 164.5 320.0" fill="none" stroke="#f4dfae" stroke-width="2.0" stroke-linecap="round"/>
<path d="M112.5 298.2 Q138.0 310.3 164.5 320.0" fill="none" stroke="#7d3a14" stroke-width="2.0" stroke-dasharray="1.6 2.6"/>
<path d="M110.4 296.2 Q136.0 311.1 163.0 323.5" fill="none" stroke="#eeb23a" stroke-width="2.0" stroke-linecap="round"/>
<path d="M110.4 296.2 Q136.0 311.1 163.0 323.5" fill="none" stroke="#7d3a14" stroke-width="2.0" stroke-dasharray="1.6 2.6"/>
<path d="M110.4 298.2 Q135.5 313.6 162.0 326.5" fill="none" stroke="#f7e9c4" stroke-width="2.0" stroke-linecap="round"/>
<path d="M110.4 298.2 Q135.5 313.6 162.0 326.5" fill="none" stroke="#7d3a14" stroke-width="2.0" stroke-dasharray="1.6 2.6"/>
<path d="M112.8 295.2 Q134.6 313.2 158.0 329.0" fill="none" stroke="#e39a2a" stroke-width="2.0" stroke-linecap="round"/>
<path d="M112.8 295.2 Q134.6 313.2 158.0 329.0" fill="none" stroke="#7d3a14" stroke-width="2.0" stroke-dasharray="1.6 2.6"/>
<path d="M113.9 298.9 Q132.7 315.9 153.0 331.0" fill="none" stroke="#f4dfae" stroke-width="2.0" stroke-linecap="round"/>
<path d="M113.9 298.9 Q132.7 315.9 153.0 331.0" fill="none" stroke="#7d3a14" stroke-width="2.0" stroke-dasharray="1.6 2.6"/>
<path d="M112.6 297.5 Q129.5 316.1 148.0 333.0" fill="none" stroke="#eeb23a" stroke-width="2.0" stroke-linecap="round"/>
<path d="M112.6 297.5 Q129.5 316.1 148.0 333.0" fill="none" stroke="#7d3a14" stroke-width="2.0" stroke-dasharray="1.6 2.6"/>
<path d="M110.6 295.1 Q125.4 315.3 142.0 334.0" fill="none" stroke="#f7e9c4" stroke-width="2.0" stroke-linecap="round"/>
<path d="M110.6 295.1 Q125.4 315.3 142.0 334.0" fill="none" stroke="#7d3a14" stroke-width="2.0" stroke-dasharray="1.6 2.6"/>
<path d="M112.1 295.2 Q123.2 314.7 136.0 333.0" fill="none" stroke="#e39a2a" stroke-width="2.0" stroke-linecap="round"/>
<path d="M112.1 295.2 Q123.2 314.7 136.0 333.0" fill="none" stroke="#7d3a14" stroke-width="2.0" stroke-dasharray="1.6 2.6"/>
<path d="M110.8 296.0 Q119.8 314.0 130.5 331.0" fill="none" stroke="#f4dfae" stroke-width="2.0" stroke-linecap="round"/>
<path d="M110.8 296.0 Q119.8 314.0 130.5 331.0" fill="none" stroke="#7d3a14" stroke-width="2.0" stroke-dasharray="1.6 2.6"/>
<path d="M110.1 296.9 Q116.8 314.0 125.0 330.5" fill="none" stroke="#eeb23a" stroke-width="2.0" stroke-linecap="round"/>
<path d="M110.1 296.9 Q116.8 314.0 125.0 330.5" fill="none" stroke="#7d3a14" stroke-width="2.0" stroke-dasharray="1.6 2.6"/>
<path d="M111.8 298.4 Q114.9 314.1 119.5 329.5" fill="none" stroke="#f7e9c4" stroke-width="2.0" stroke-linecap="round"/>
<path d="M111.8 298.4 Q114.9 314.1 119.5 329.5" fill="none" stroke="#7d3a14" stroke-width="2.0" stroke-dasharray="1.6 2.6"/>
<path d="M112.1 297.6 Q112.8 313.1 115.0 328.5" fill="none" stroke="#e39a2a" stroke-width="2.0" stroke-linecap="round"/>
<path d="M112.1 297.6 Q112.8 313.1 115.0 328.5" fill="none" stroke="#7d3a14" stroke-width="2.0" stroke-dasharray="1.6 2.6"/>
<path d="M112.0 297.6 Q110.5 312.5 110.5 327.5" fill="none" stroke="#f4dfae" stroke-width="2.0" stroke-linecap="round"/>
<path d="M112.0 297.6 Q110.5 312.5 110.5 327.5" fill="none" stroke="#7d3a14" stroke-width="2.0" stroke-dasharray="1.6 2.6"/>
<path d="M112.0 297.0 Q130.3 300.1 148.5 303.2" fill="none" stroke="#eeb23a" stroke-width="1.2" stroke-linecap="round"/>
<path d="M112.0 297.0 Q130.3 300.1 148.5 303.2" fill="none" stroke="#8a4a1c" stroke-width="1.2" stroke-dasharray="1.2 2.4"/>
<path d="M112.0 297.0 Q128.5 301.0 144.9 305.1" fill="none" stroke="#f7e9c4" stroke-width="1.2" stroke-linecap="round"/>
<path d="M112.0 297.0 Q128.5 301.0 144.9 305.1" fill="none" stroke="#8a4a1c" stroke-width="1.2" stroke-dasharray="1.2 2.4"/>
<path d="M112.0 297.0 Q133.3 303.9 154.6 310.8" fill="none" stroke="#e39a2a" stroke-width="1.2" stroke-linecap="round"/>
<path d="M112.0 297.0 Q133.3 303.9 154.6 310.8" fill="none" stroke="#8a4a1c" stroke-width="1.2" stroke-dasharray="1.2 2.4"/>
<path d="M112.0 297.0 Q132.5 305.3 152.9 313.7" fill="none" stroke="#f4dfae" stroke-width="1.2" stroke-linecap="round"/>
<path d="M112.0 297.0 Q132.5 305.3 152.9 313.7" fill="none" stroke="#8a4a1c" stroke-width="1.2" stroke-dasharray="1.2 2.4"/>
<path d="M112.0 297.0 Q130.4 306.2 148.8 315.4" fill="none" stroke="#eeb23a" stroke-width="1.2" stroke-linecap="round"/>
<path d="M112.0 297.0 Q130.4 306.2 148.8 315.4" fill="none" stroke="#8a4a1c" stroke-width="1.2" stroke-dasharray="1.2 2.4"/>
<path d="M112.0 297.0 Q128.5 306.9 145.0 316.9" fill="none" stroke="#f7e9c4" stroke-width="1.2" stroke-linecap="round"/>
<path d="M112.0 297.0 Q128.5 306.9 145.0 316.9" fill="none" stroke="#8a4a1c" stroke-width="1.2" stroke-dasharray="1.2 2.4"/>
<path d="M112.0 297.0 Q125.0 306.4 138.0 315.8" fill="none" stroke="#e39a2a" stroke-width="1.2" stroke-linecap="round"/>
<path d="M112.0 297.0 Q125.0 306.4 138.0 315.8" fill="none" stroke="#8a4a1c" stroke-width="1.2" stroke-dasharray="1.2 2.4"/>
<path d="M112.0 297.0 Q123.5 306.9 135.0 316.7" fill="none" stroke="#f4dfae" stroke-width="1.2" stroke-linecap="round"/>
<path d="M112.0 297.0 Q123.5 306.9 135.0 316.7" fill="none" stroke="#8a4a1c" stroke-width="1.2" stroke-dasharray="1.2 2.4"/>
<path d="M112.0 297.0 Q122.7 307.9 133.3 318.8" fill="none" stroke="#eeb23a" stroke-width="1.2" stroke-linecap="round"/>
<path d="M112.0 297.0 Q122.7 307.9 133.3 318.8" fill="none" stroke="#8a4a1c" stroke-width="1.2" stroke-dasharray="1.2 2.4"/>
<path d="M112.0 297.0 Q120.5 307.4 129.0 317.9" fill="none" stroke="#f7e9c4" stroke-width="1.2" stroke-linecap="round"/>
<path d="M112.0 297.0 Q120.5 307.4 129.0 317.9" fill="none" stroke="#8a4a1c" stroke-width="1.2" stroke-dasharray="1.2 2.4"/>
<path d="M112.0 297.0 Q121.9 311.9 131.8 326.9" fill="none" stroke="#e39a2a" stroke-width="1.2" stroke-linecap="round"/>
<path d="M112.0 297.0 Q121.9 311.9 131.8 326.9" fill="none" stroke="#8a4a1c" stroke-width="1.2" stroke-dasharray="1.2 2.4"/>
<path d="M112.0 297.0 Q119.1 310.4 126.2 323.8" fill="none" stroke="#f4dfae" stroke-width="1.2" stroke-linecap="round"/>
<path d="M112.0 297.0 Q119.1 310.4 126.2 323.8" fill="none" stroke="#8a4a1c" stroke-width="1.2" stroke-dasharray="1.2 2.4"/>
<path d="M112.0 297.0 Q118.7 313.6 125.5 330.1" fill="none" stroke="#eeb23a" stroke-width="1.2" stroke-linecap="round"/>
<path d="M112.0 297.0 Q118.7 313.6 125.5 330.1" fill="none" stroke="#8a4a1c" stroke-width="1.2" stroke-dasharray="1.2 2.4"/>
<path d="M112.0 297.0 Q116.1 311.1 120.1 325.2" fill="none" stroke="#f7e9c4" stroke-width="1.2" stroke-linecap="round"/>
<path d="M112.0 297.0 Q116.1 311.1 120.1 325.2" fill="none" stroke="#8a4a1c" stroke-width="1.2" stroke-dasharray="1.2 2.4"/>
<path d="M112.0 297.0 Q115.2 315.0 118.3 332.9" fill="none" stroke="#e39a2a" stroke-width="1.2" stroke-linecap="round"/>
<path d="M112.0 297.0 Q115.2 315.0 118.3 332.9" fill="none" stroke="#8a4a1c" stroke-width="1.2" stroke-dasharray="1.2 2.4"/>
<path d="M112.0 297.0 Q113.1 314.4 114.3 331.8" fill="none" stroke="#f4dfae" stroke-width="1.2" stroke-linecap="round"/>
<path d="M112.0 297.0 Q113.1 314.4 114.3 331.8" fill="none" stroke="#8a4a1c" stroke-width="1.2" stroke-dasharray="1.2 2.4"/>
<path d="M112.0 297.0 Q111.5 309.0 111.0 321.0" fill="none" stroke="#eeb23a" stroke-width="1.2" stroke-linecap="round"/>
<path d="M112.0 297.0 Q111.5 309.0 111.0 321.0" fill="none" stroke="#8a4a1c" stroke-width="1.2" stroke-dasharray="1.2 2.4"/>
<path d="M112.0 297.0 Q110.0 310.2 107.9 323.5" fill="none" stroke="#f7e9c4" stroke-width="1.2" stroke-linecap="round"/>
<path d="M112.0 297.0 Q110.0 310.2 107.9 323.5" fill="none" stroke="#8a4a1c" stroke-width="1.2" stroke-dasharray="1.2 2.4"/>
<path d="M117.6 290.8 Q149.4 281.9 181.5 274.5" fill="none" stroke="#eea02c" stroke-width="1.9" stroke-linecap="round"/>
<path d="M117.6 290.8 Q149.4 281.9 181.5 274.5" fill="none" stroke="#a41c12" stroke-width="1.9" stroke-dasharray="1.3 1.9"/>
<path d="M117.9 290.4 Q150.3 284.4 183.0 280.0" fill="none" stroke="#eea02c" stroke-width="1.9" stroke-linecap="round"/>
<path d="M117.9 290.4 Q150.3 284.4 183.0 280.0" fill="none" stroke="#a41c12" stroke-width="1.9" stroke-dasharray="1.3 1.9"/>
<path d="M114.3 291.8 Q149.6 287.8 185.0 285.5" fill="none" stroke="#eea02c" stroke-width="1.9" stroke-linecap="round"/>
<path d="M114.3 291.8 Q149.6 287.8 185.0 285.5" fill="none" stroke="#a41c12" stroke-width="1.9" stroke-dasharray="1.3 1.9"/>
<path d="M117.1 289.6 Q152.1 289.5 187.0 291.0" fill="none" stroke="#eea02c" stroke-width="1.9" stroke-linecap="round"/>
<path d="M117.1 289.6 Q152.1 289.5 187.0 291.0" fill="none" stroke="#a41c12" stroke-width="1.9" stroke-dasharray="1.3 1.9"/>
<path d="M114.3 290.0 Q150.3 292.6 186.0 297.0" fill="none" stroke="#eea02c" stroke-width="1.9" stroke-linecap="round"/>
<path d="M114.3 290.0 Q150.3 292.6 186.0 297.0" fill="none" stroke="#a41c12" stroke-width="1.9" stroke-dasharray="1.3 1.9"/>
<path d="M117.9 292.5 Q148.8 295.8 179.5 300.5" fill="none" stroke="#eea02c" stroke-width="1.9" stroke-linecap="round"/>
<path d="M117.9 292.5 Q148.8 295.8 179.5 300.5" fill="none" stroke="#a41c12" stroke-width="1.9" stroke-dasharray="1.3 1.9"/>
<path d="M114.5 289.5 Q144.4 295.8 174.0 303.5" fill="none" stroke="#eea02c" stroke-width="1.9" stroke-linecap="round"/>
<path d="M114.5 289.5 Q144.4 295.8 174.0 303.5" fill="none" stroke="#a41c12" stroke-width="1.9" stroke-dasharray="1.3 1.9"/>
<path d="M116.0 292.0 Q139.8 285.2 163.5 278.4" fill="none" stroke="#f0a830" stroke-width="1.4" stroke-linecap="round"/>
<path d="M116.0 292.0 Q139.8 285.2 163.5 278.4" fill="none" stroke="#a82414" stroke-width="1.4" stroke-dasharray="1.2 1.8"/>
<path d="M116.0 292.0 Q139.8 286.8 163.7 281.5" fill="none" stroke="#f0a830" stroke-width="1.4" stroke-linecap="round"/>
<path d="M116.0 292.0 Q139.8 286.8 163.7 281.5" fill="none" stroke="#a82414" stroke-width="1.4" stroke-dasharray="1.2 1.8"/>
<path d="M116.0 292.0 Q145.2 287.5 174.5 282.9" fill="none" stroke="#f0a830" stroke-width="1.4" stroke-linecap="round"/>
<path d="M116.0 292.0 Q145.2 287.5 174.5 282.9" fill="none" stroke="#a82414" stroke-width="1.4" stroke-dasharray="1.2 1.8"/>
<path d="M116.0 292.0 Q141.1 289.7 166.3 287.4" fill="none" stroke="#f0a830" stroke-width="1.4" stroke-linecap="round"/>
<path d="M116.0 292.0 Q141.1 289.7 166.3 287.4" fill="none" stroke="#a82414" stroke-width="1.4" stroke-dasharray="1.2 1.8"/>
<path d="M116.0 292.0 Q143.9 291.2 171.8 290.4" fill="none" stroke="#f0a830" stroke-width="1.4" stroke-linecap="round"/>
<path d="M116.0 292.0 Q143.9 291.2 171.8 290.4" fill="none" stroke="#a82414" stroke-width="1.4" stroke-dasharray="1.2 1.8"/>
<path d="M116.0 292.0 Q143.1 292.9 170.2 293.9" fill="none" stroke="#f0a830" stroke-width="1.4" stroke-linecap="round"/>
<path d="M116.0 292.0 Q143.1 292.9 170.2 293.9" fill="none" stroke="#a82414" stroke-width="1.4" stroke-dasharray="1.2 1.8"/>
<path d="M116.0 292.0 Q141.2 294.5 166.4 296.9" fill="none" stroke="#f0a830" stroke-width="1.4" stroke-linecap="round"/>
<path d="M116.0 292.0 Q141.2 294.5 166.4 296.9" fill="none" stroke="#a82414" stroke-width="1.4" stroke-dasharray="1.2 1.8"/>
<path d="M116.0 292.0 Q144.7 296.7 173.5 301.3" fill="none" stroke="#f0a830" stroke-width="1.4" stroke-linecap="round"/>
<path d="M116.0 292.0 Q144.7 296.7 173.5 301.3" fill="none" stroke="#a82414" stroke-width="1.4" stroke-dasharray="1.2 1.8"/>
<path d="M116.0 292.0 Q140.3 297.5 164.6 303.0" fill="none" stroke="#f0a830" stroke-width="1.4" stroke-linecap="round"/>
<path d="M116.0 292.0 Q140.3 297.5 164.6 303.0" fill="none" stroke="#a82414" stroke-width="1.4" stroke-dasharray="1.2 1.8"/>
<path d="M138 272 L156 262 L172 266 L177 281 L150 288Z" fill="#f5c838"/>
<path d="M134.0 284.0 Q147.0 273.5 160.0 263.0" fill="none" stroke="#e58a1c" stroke-width="1.1" stroke-linecap="round"/>
<path d="M134.0 284.0 Q147.0 273.5 160.0 263.0" fill="none" stroke="#b03414" stroke-width="1.1" stroke-dasharray="1.2 1.8"/>
<path d="M135.5 282.8 Q149.1 274.4 162.6 266.0" fill="none" stroke="#e58a1c" stroke-width="1.1" stroke-linecap="round"/>
<path d="M135.5 282.8 Q149.1 274.4 162.6 266.0" fill="none" stroke="#b03414" stroke-width="1.1" stroke-dasharray="1.2 1.8"/>
<path d="M137.0 281.6 Q151.1 275.3 165.2 269.0" fill="none" stroke="#e58a1c" stroke-width="1.1" stroke-linecap="round"/>
<path d="M137.0 281.6 Q151.1 275.3 165.2 269.0" fill="none" stroke="#b03414" stroke-width="1.1" stroke-dasharray="1.2 1.8"/>
<path d="M138.5 280.4 Q153.2 276.2 167.8 272.0" fill="none" stroke="#e58a1c" stroke-width="1.1" stroke-linecap="round"/>
<path d="M138.5 280.4 Q153.2 276.2 167.8 272.0" fill="none" stroke="#b03414" stroke-width="1.1" stroke-dasharray="1.2 1.8"/>
<path d="M140.0 279.2 Q155.2 277.1 170.4 275.0" fill="none" stroke="#e58a1c" stroke-width="1.1" stroke-linecap="round"/>
<path d="M140.0 279.2 Q155.2 277.1 170.4 275.0" fill="none" stroke="#b03414" stroke-width="1.1" stroke-dasharray="1.2 1.8"/>
<path d="M141.5 278.0 Q157.2 278.0 173.0 278.0" fill="none" stroke="#e58a1c" stroke-width="1.1" stroke-linecap="round"/>
<path d="M141.5 278.0 Q157.2 278.0 173.0 278.0" fill="none" stroke="#b03414" stroke-width="1.1" stroke-dasharray="1.2 1.8"/>
<path d="M143.0 276.8 Q159.3 278.9 175.6 281.0" fill="none" stroke="#e58a1c" stroke-width="1.1" stroke-linecap="round"/>
<path d="M143.0 276.8 Q159.3 278.9 175.6 281.0" fill="none" stroke="#b03414" stroke-width="1.1" stroke-dasharray="1.2 1.8"/>
<path d="M110.3 274.0 Q129.1 258.7 149.0 245.0" fill="none" stroke="#eea02c" stroke-width="1.9" stroke-linecap="round"/>
<path d="M110.3 274.0 Q129.1 258.7 149.0 245.0" fill="none" stroke="#a41c12" stroke-width="1.9" stroke-dasharray="1.3 1.9"/>
<path d="M111.4 275.2 Q131.9 261.0 153.5 248.5" fill="none" stroke="#eea02c" stroke-width="1.9" stroke-linecap="round"/>
<path d="M111.4 275.2 Q131.9 261.0 153.5 248.5" fill="none" stroke="#a41c12" stroke-width="1.9" stroke-dasharray="1.3 1.9"/>
<path d="M114.2 276.4 Q136.5 260.3 160.0 246.0" fill="none" stroke="#eea02c" stroke-width="1.9" stroke-linecap="round"/>
<path d="M114.2 276.4 Q136.5 260.3 160.0 246.0" fill="none" stroke="#a41c12" stroke-width="1.9" stroke-dasharray="1.3 1.9"/>
<path d="M116.0 277.6 Q146.5 258.3 178.5 241.5" fill="none" stroke="#eea02c" stroke-width="1.9" stroke-linecap="round"/>
<path d="M116.0 277.6 Q146.5 258.3 178.5 241.5" fill="none" stroke="#a41c12" stroke-width="1.9" stroke-dasharray="1.3 1.9"/>
<path d="M118.3 278.8 Q144.4 264.8 171.5 253.0" fill="none" stroke="#eea02c" stroke-width="1.9" stroke-linecap="round"/>
<path d="M118.3 278.8 Q144.4 264.8 171.5 253.0" fill="none" stroke="#a41c12" stroke-width="1.9" stroke-dasharray="1.3 1.9"/>
<path d="M121.9 280.0 Q145.8 268.3 170.5 258.5" fill="none" stroke="#eea02c" stroke-width="1.9" stroke-linecap="round"/>
<path d="M121.9 280.0 Q145.8 268.3 170.5 258.5" fill="none" stroke="#a41c12" stroke-width="1.9" stroke-dasharray="1.3 1.9"/>
<path d="M123.8 281.2 Q147.9 272.9 172.5 266.5" fill="none" stroke="#eea02c" stroke-width="1.9" stroke-linecap="round"/>
<path d="M123.8 281.2 Q147.9 272.9 172.5 266.5" fill="none" stroke="#a41c12" stroke-width="1.9" stroke-dasharray="1.3 1.9"/>
<path d="M125.0 282.4 Q144.9 265.4 166.0 250.0" fill="none" stroke="#eea02c" stroke-width="1.9" stroke-linecap="round"/>
<path d="M125.0 282.4 Q144.9 265.4 166.0 250.0" fill="none" stroke="#a41c12" stroke-width="1.9" stroke-dasharray="1.3 1.9"/>
<path d="M112.0 277.0 Q126.2 260.1 140.4 243.2" fill="none" stroke="#f0a830" stroke-width="1.3" stroke-linecap="round"/>
<path d="M112.0 277.0 Q126.2 260.1 140.4 243.2" fill="none" stroke="#a82414" stroke-width="1.3" stroke-dasharray="1.2 1.8"/>
<path d="M113.0 277.6 Q124.5 265.5 135.9 253.4" fill="none" stroke="#f0a830" stroke-width="1.3" stroke-linecap="round"/>
<path d="M113.0 277.6 Q124.5 265.5 135.9 253.4" fill="none" stroke="#a82414" stroke-width="1.3" stroke-dasharray="1.2 1.8"/>
<path d="M114.0 278.2 Q127.2 265.8 140.5 253.3" fill="none" stroke="#f0a830" stroke-width="1.3" stroke-linecap="round"/>
<path d="M114.0 278.2 Q127.2 265.8 140.5 253.3" fill="none" stroke="#a82414" stroke-width="1.3" stroke-dasharray="1.2 1.8"/>
<path d="M115.0 278.8 Q131.8 264.8 148.6 250.8" fill="none" stroke="#f0a830" stroke-width="1.3" stroke-linecap="round"/>
<path d="M115.0 278.8 Q131.8 264.8 148.6 250.8" fill="none" stroke="#a82414" stroke-width="1.3" stroke-dasharray="1.2 1.8"/>
<path d="M116.0 279.4 Q132.2 267.5 148.4 255.5" fill="none" stroke="#f0a830" stroke-width="1.3" stroke-linecap="round"/>
<path d="M116.0 279.4 Q132.2 267.5 148.4 255.5" fill="none" stroke="#a82414" stroke-width="1.3" stroke-dasharray="1.2 1.8"/>
<path d="M117.0 280.0 Q130.3 271.4 143.5 262.8" fill="none" stroke="#f0a830" stroke-width="1.3" stroke-linecap="round"/>
<path d="M117.0 280.0 Q130.3 271.4 143.5 262.8" fill="none" stroke="#a82414" stroke-width="1.3" stroke-dasharray="1.2 1.8"/>
<path d="M118.0 280.6 Q137.9 269.3 157.8 258.0" fill="none" stroke="#f0a830" stroke-width="1.3" stroke-linecap="round"/>
<path d="M118.0 280.6 Q137.9 269.3 157.8 258.0" fill="none" stroke="#a82414" stroke-width="1.3" stroke-dasharray="1.2 1.8"/>
<path d="M119.0 281.2 Q134.0 273.8 149.0 266.4" fill="none" stroke="#f0a830" stroke-width="1.3" stroke-linecap="round"/>
<path d="M119.0 281.2 Q134.0 273.8 149.0 266.4" fill="none" stroke="#a82414" stroke-width="1.3" stroke-dasharray="1.2 1.8"/>
<path d="M120.0 281.8 Q135.7 275.2 151.5 268.6" fill="none" stroke="#f0a830" stroke-width="1.3" stroke-linecap="round"/>
<path d="M120.0 281.8 Q135.7 275.2 151.5 268.6" fill="none" stroke="#a82414" stroke-width="1.3" stroke-dasharray="1.2 1.8"/>
<path d="M121.0 282.4 Q141.0 275.4 161.0 268.3" fill="none" stroke="#f0a830" stroke-width="1.3" stroke-linecap="round"/>
<path d="M121.0 282.4 Q141.0 275.4 161.0 268.3" fill="none" stroke="#a82414" stroke-width="1.3" stroke-dasharray="1.2 1.8"/>
<path d="M98 273 C99 262 105 254 111.5 251.5 C111 258 107 267 104 275Z" fill="#f8d63c"/>
<path d="M102 274 C107 262 115 251 122.5 247.5 C120 257 114 267 108 276Z" fill="#f5c42a"/>
<path d="M106 276 C112 267 121 259 129 256 C125 264 118 271 112 278Z" fill="#efb224"/>
<path d="M103 273 L113 257 M107 275 L119 256" stroke="#c97a14" stroke-width="0.8" fill="none"/>
<path d="M75.5 303 C77 294 86 283 98 275 C108 269 122 270 130 277 C136 283 134 294 128 301 C122 309 116 319 107 324.5 C98 329 86 326 80 318 C76 312 75 308 75.5 303Z" fill="#e9981f"/>
<path d="M90.0 283.0 C84.0 292.0 83.0 306.0 87.0 320.0" fill="none" stroke="#f9ebc0" stroke-width="1.5"/>
<path d="M94.6 281.4 C88.6 292.0 87.6 306.0 91.6 320.0" fill="none" stroke="#8f3812" stroke-width="1.5"/>
<path d="M99.2 279.8 C93.2 292.0 92.2 306.0 96.2 320.0" fill="none" stroke="#f9ebc0" stroke-width="1.5"/>
<path d="M103.8 278.2 C97.8 292.0 96.8 306.0 100.8 320.0" fill="none" stroke="#8f3812" stroke-width="1.5"/>
<path d="M108.4 276.6 C102.4 292.0 101.4 306.0 105.4 317.2" fill="none" stroke="#f9ebc0" stroke-width="1.5"/>
<path d="M113.0 276.6 C107.0 292.0 106.0 306.0 110.0 314.4" fill="none" stroke="#8f3812" stroke-width="1.5"/>
<path d="M117.6 276.6 C111.6 292.0 110.6 306.0 114.6 311.6" fill="none" stroke="#f9ebc0" stroke-width="1.5"/>
<path d="M122.2 276.6 C116.2 292.0 115.2 306.0 119.2 308.8" fill="none" stroke="#8f3812" stroke-width="1.5"/>
<path d="M126.8 276.6 C120.8 292.0 119.8 306.0 123.8 306.0" fill="none" stroke="#f9ebc0" stroke-width="1.5"/>
<path d="M131.4 276.6 C125.4 292.0 124.4 306.0 128.4 303.2" fill="none" stroke="#8f3812" stroke-width="1.5"/>
<path d="M75.5 303 C79 297 85 295 91 297 C88 304 86 313 89 323 C83 321 77 314 75.5 303Z" fill="#f2ad2c"/>
<path d="M78 304 L88 301 M77.5 309 L87 308 M79 314 L87.5 315 M82 319 L88 320" stroke="#a85410" stroke-width="0.9" fill="none"/>
<circle cx="94" cy="291.5" r="1.6" fill="#4a220a"/><circle cx="94" cy="291.5" r="0.5" fill="#f6d68a"/>
<path d="M73.5 284 C78 288 84 290.5 91 291.5 L92 287.5 C86 288 80 287 73.5 284Z" fill="#f2a422"/>
<path d="M86 290 L84.5 281 L90 288Z" fill="#e58a1c"/>
<path d="M103 322 L100.5 331 L107 327Z" fill="#1e140c"/>
<path d="M108 325 L117 331 L122 327 L113 321Z" fill="#f4c434"/>
</g>
</svg>
</div>
<div id="redbox" class="abs"></div>
<div class="tx" style="left:145.5px;top:22.0px;font-size:8.6px;font-weight:normal;color:#cdcdcd;-webkit-text-stroke:0.25px #cdcdcd;transform:scaleX(0.9627);">Mode:</div>
<div class="tx" style="left:178px;top:22.0px;font-size:8.6px;font-weight:normal;color:#f0f0f0;-webkit-text-stroke:0.25px #f0f0f0;transform:scaleX(0.9133);">Normal</div>
<div class="tx" style="left:275.7px;top:22.0px;font-size:8.6px;font-weight:normal;color:#cdcdcd;-webkit-text-stroke:0.25px #cdcdcd;transform:scaleX(0.9483);">Opacity:</div>
<div class="tx" style="left:311.8px;top:22.0px;font-size:8.6px;font-weight:normal;color:#f0f0f0;-webkit-text-stroke:0.25px #f0f0f0;transform:scaleX(0.9097);">100%</div>
<div class="tx" style="left:381.2px;top:22.0px;font-size:8.6px;font-weight:normal;color:#cdcdcd;-webkit-text-stroke:0.25px #cdcdcd;transform:scaleX(0.8760);">Flow:</div>
<div class="tx" style="left:405.4px;top:22.0px;font-size:8.6px;font-weight:normal;color:#f0f0f0;-webkit-text-stroke:0.25px #f0f0f0;transform:scaleX(0.8733);">100%</div>
<div class="tx" style="left:474.8px;top:22.0px;font-size:8.6px;font-weight:normal;color:#cdcdcd;-webkit-text-stroke:0.25px #cdcdcd;transform:scaleX(0.9199);">Smoothing:</div>
<div class="tx" style="left:521.2px;top:22.0px;font-size:8.6px;font-weight:normal;color:#f0f0f0;-webkit-text-stroke:0.25px #f0f0f0;transform:scaleX(0.8022);">10%</div>
<div class="tx" style="left:84.5px;top:28.6px;font-size:7.8px;font-weight:normal;color:#f0f0f0;-webkit-text-stroke:0.25px #f0f0f0;transform:scaleX(0.9908);">1335</div>
<div class="tx" style="left:48.6px;top:46.4px;font-size:10.2px;font-weight:bold;color:#eeeeee;-webkit-text-stroke:0px #eeeeee;transform:scaleX(0.8901);">Untitled-1 @ 100% (Layer 1, RGB/8) *</div>
<div class="tx" style="left:46.7px;top:354.2px;font-size:9.8px;font-weight:bold;color:#1c1c1c;-webkit-text-stroke:0px #1c1c1c;transform:scaleX(0.7992);">Brush tool (B)</div>
<div class="tx" style="left:46.7px;top:370.0px;font-size:9.8px;font-weight:normal;color:#484848;-webkit-text-stroke:0px #484848;transform:scaleX(0.8191);">Paints custom brush strokes</div>
<div class="tx" style="left:168.8px;top:389.0px;font-size:9.7px;font-weight:bold;color:#1268e2;-webkit-text-stroke:0px #1268e2;transform:scaleX(0.9535);">Learn how</div>
</body>
</html>
